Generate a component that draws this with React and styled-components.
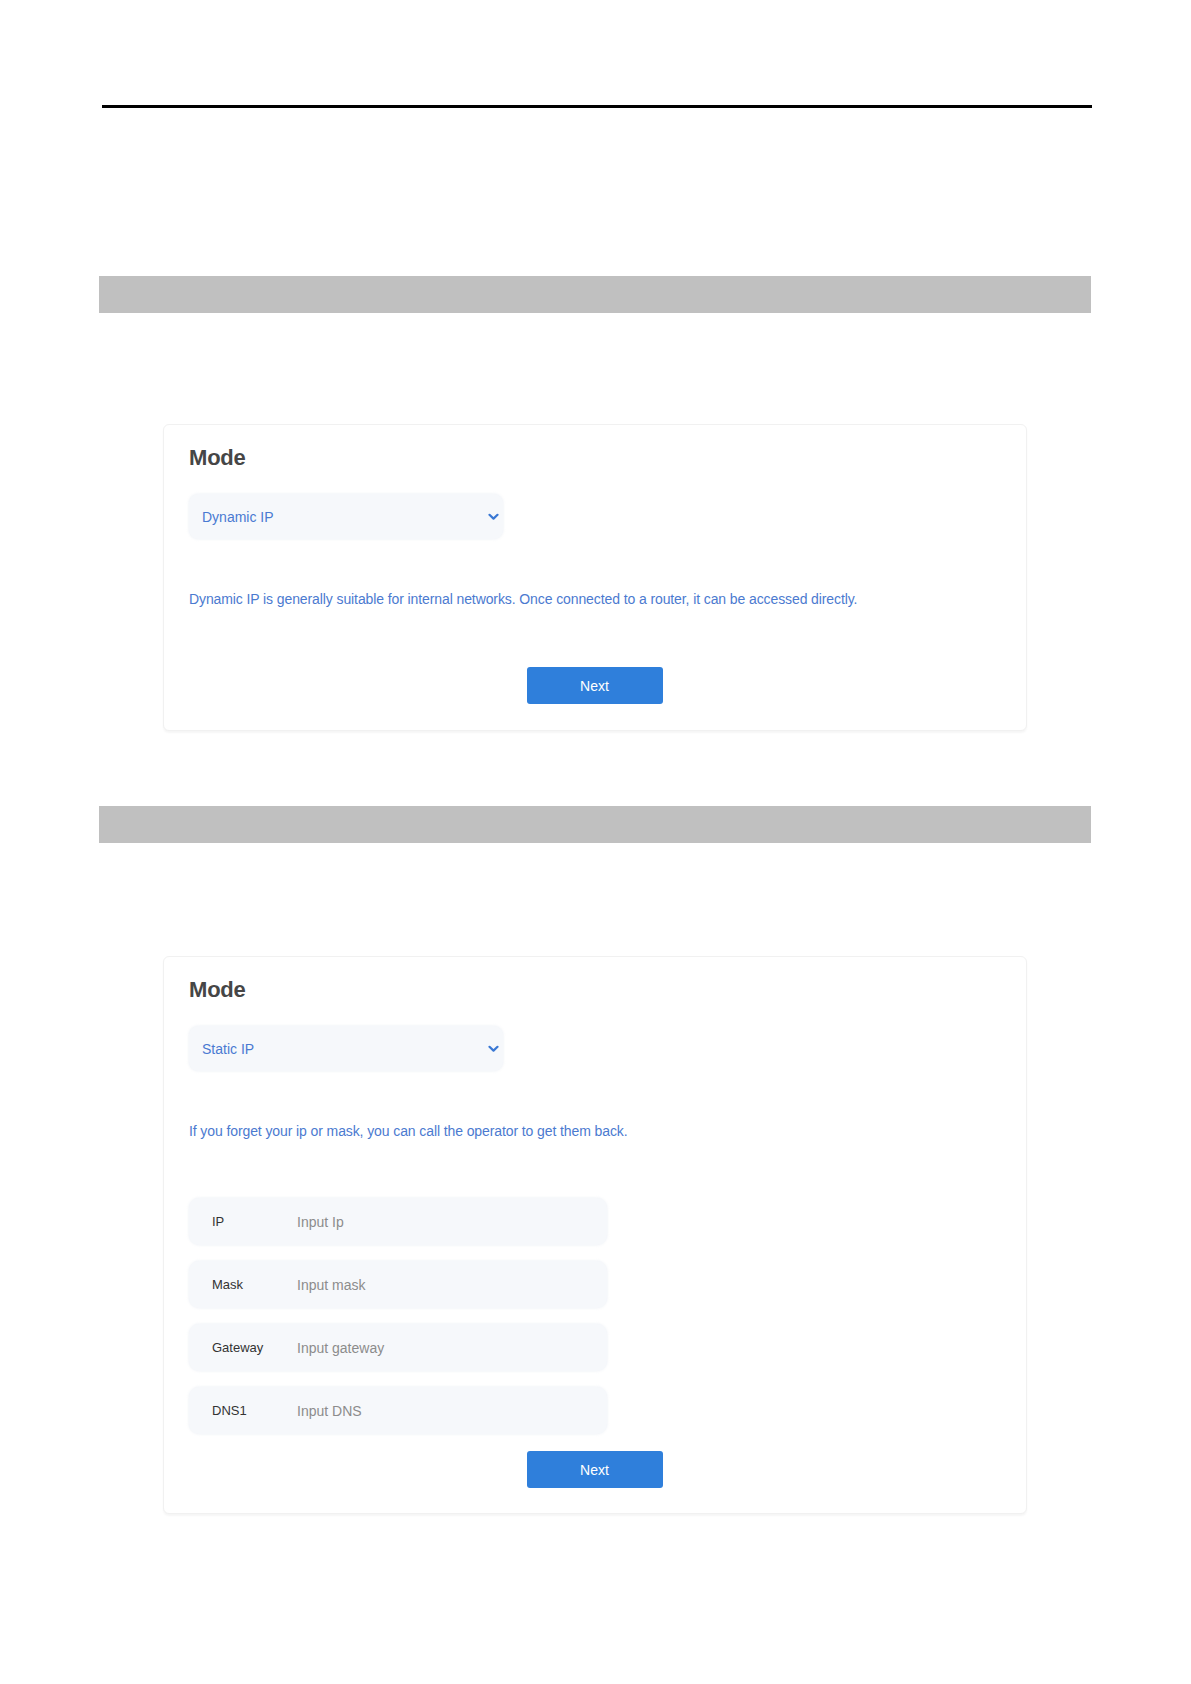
import React from 'react';
import styled, { createGlobalStyle } from 'styled-components';

const GlobalStyle = createGlobalStyle`
  html, body {
    margin: 0;
    padding: 0;
    background: #ffffff;
    font-family: "Liberation Sans", Arial, sans-serif;
  }
`;

const Page = styled.div`
  width: 1191px;
  min-height: 1684px;
  padding-top: 105px;
  box-sizing: border-box;
`;

const Rule = styled.div`
  margin-left: 102px;
  width: 990px;
  height: 3px;
  background: #000;
`;

const Banner = styled.div`
  margin-left: 99px;
  margin-top: ${(p) => p.top}px;
  width: 992px;
  height: 37px;
  background: #c0c0c0;
`;

const Card = styled.div`
  margin-left: 163px;
  margin-top: ${(p) => p.top}px;
  width: 864px;
  box-sizing: border-box;
  padding: 19px 26px ${(p) => p.bottom}px 25px;
  background: #fff;
  border: 1px solid #f1f1f1;
  border-radius: 6px;
  box-shadow: 0 2px 2px rgba(0, 0, 0, 0.04);
  display: flex;
  flex-direction: column;
`;

const Title = styled.h2`
  margin: 0;
  font-size: 22px;
  line-height: 28px;
  font-weight: 700;
  letter-spacing: -0.2px;
  color: #464646;
`;

const Select = styled.div`
  margin-top: 22px;
  width: 314px;
  height: 45px;
  box-sizing: border-box;
  padding: 0 4px 0 13px;
  background: #f6f8fb;
  border-radius: 9px;
  box-shadow: 0 0 3px rgba(220, 226, 236, 0.6);
  display: flex;
  align-items: center;
  justify-content: space-between;
  color: #4a7ad2;
  font-size: 14px;
`;

const Hint = styled.p`
  margin: 50px 0 0;
  font-size: 14px;
  line-height: 20px;
  letter-spacing: -0.1px;
  color: #4b7ad0;
`;

const Fields = styled.div`
  margin-top: 57px;
  display: flex;
  flex-direction: column;
  gap: 16px;
`;

const Field = styled.div`
  width: 418px;
  height: 47px;
  box-sizing: border-box;
  padding-left: 23px;
  background: #f6f8fb;
  border-radius: 10px;
  box-shadow: 0 0 3px rgba(220, 226, 236, 0.6);
  display: flex;
  align-items: center;
`;

const Label = styled.span`
  width: 85px;
  font-size: 13px;
  color: #333;
`;

const Placeholder = styled.span`
  font-size: 14px;
  color: #8c8c8c;
`;

const Button = styled.button`
  align-self: center;
  margin-top: ${(p) => p.top}px;
  width: 136px;
  height: 37px;
  border: none;
  border-radius: 3px;
  background: #2f7fdb;
  color: #fff;
  font-family: "Liberation Sans", Arial, sans-serif;
  font-size: 14px;
  cursor: pointer;
`;

const Chevron = () => (
  <svg width="11" height="8" viewBox="0 0 11 8">
    <path d="M1.5 1.8 L5.5 5.6 L9.5 1.8" fill="none" stroke="#3a78d4" strokeWidth="2.2" strokeLinecap="round" strokeLinejoin="round" />
  </svg>
);

const fields = [
  { label: 'IP', placeholder: 'Input Ip' },
  { label: 'Mask', placeholder: 'Input mask' },
  { label: 'Gateway', placeholder: 'Input gateway' },
  { label: 'DNS1', placeholder: 'Input DNS' },
];

export default function App() {
  return (
    <>
      <GlobalStyle />
      <Page>
        <Rule />

        <Banner top={168} />
        <Card top={111} bottom={26}>
          <Title>Mode</Title>
          <Select>
            <span>Dynamic IP</span>
            <Chevron />
          </Select>
          <Hint>
            Dynamic IP is generally suitable for internal networks. Once connected to a router, it can be accessed directly.
          </Hint>
          <Button top={58}>Next</Button>
        </Card>

        <Banner top={75} />
        <Card top={113} bottom={25}>
          <Title>Mode</Title>
          <Select>
            <span>Static IP</span>
            <Chevron />
          </Select>
          <Hint>If you forget your ip or mask, you can call the operator to get them back.</Hint>
          <Fields>
            {fields.map((f) => (
              <Field key={f.label}>
                <Label>{f.label}</Label>
                <Placeholder>{f.placeholder}</Placeholder>
              </Field>
            ))}
          </Fields>
          <Button top={17}>Next</Button>
        </Card>
      </Page>
    </>
  );
}
